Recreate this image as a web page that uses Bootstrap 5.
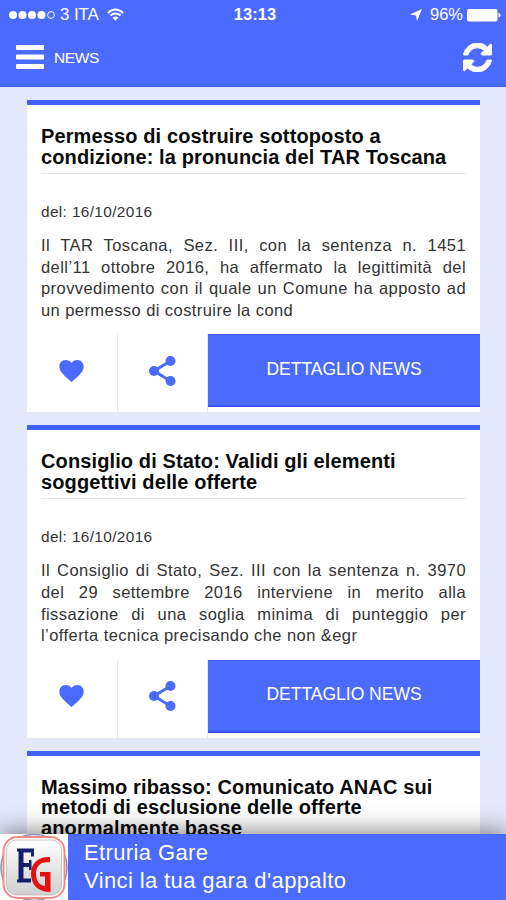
<!DOCTYPE html>
<html lang="it">
<head>
<meta charset="utf-8">
<meta name="viewport" content="width=device-width, initial-scale=1">
<title>News</title>
<link href="https://cdn.jsdelivr.net/npm/bootstrap@5.3.0/dist/css/bootstrap.min.css" rel="stylesheet">
<style>
:root { --brand: #4b6bff; --page: #e4e8fb; }
body { font-family: "Liberation Sans", Arial, sans-serif; background: var(--page); }
.screen { width: 506px; height: 900px; }
.app-header { height: 87px; background: var(--brand); border-bottom: 1px solid #3d5cec; }
.status-bar { height: 29px; padding: 0 5px 0 9px; font-size: 17.5px; line-height: 29px; }
.status-bar .clock { font-size: 16.5px; letter-spacing: .1px; }
.carrier { font-size: 17px; margin-left: 5px; letter-spacing: -.1px; }
.charge { font-size: 16.5px; }
.app-bar { height: 57px; padding: 0 14px 0 16px; }
.app-title { font-size: 15.5px; margin-left: 10px; letter-spacing: -.4px; }
.feed { padding: 13px 26px 0 27px; gap: 13px; }
.news-card { --bs-card-border-radius: 0; border: 0; border-top: 5px solid #3f62f5; height: 312.3px; flex: none; color: #000; }
.news-head { margin: 21px 14px 0; padding-bottom: 6px; border-bottom: 1px solid #e4e8fb; font-size: 20px; line-height: 20.5px; font-weight: 700; letter-spacing: .12px; color: #0b0b0b; }
.news-date { margin: 28px 14px 0; font-size: 15.4px; line-height: 20px; letter-spacing: .36px; color: #333; }
.news-text { margin: 13px 14px 0; font-size: 16.5px; line-height: 21.7px; letter-spacing: .43px; text-align: justify; color: #333; }
.actions { height: 78px; }
.action { width: 90.5px; border-right: 1px solid #e6e9fb; color: var(--brand); padding-bottom: 5px; }
.btn-detail { --bs-btn-border-radius: 0; height: 73px; background: var(--brand); border: 0; border-top: 1px solid #3d5cec; border-bottom: 2px solid #3355ee; color: #fff; font-size: 17.5px; padding: 0 0 3px; }
.ad-banner { height: 66px; background: var(--brand); box-shadow: 0 -2px 24px rgba(0,0,0,.5); }
.ad-logo { width: 68px; background: #fff; }
.ad-text { padding: 5px 0 0 16px; font-size: 22px; line-height: 28px; letter-spacing: .38px; }
</style>
<script src="https://cdn.jsdelivr.net/npm/bootstrap@5.3.0/dist/js/bootstrap.bundle.min.js"></script>
</head>
<body class="m-0 overflow-hidden">
<div class="screen d-flex flex-column position-relative overflow-hidden">
  <header class="app-header text-white flex-shrink-0">
    <div class="status-bar row g-0">
      <div class="col d-flex align-items-center">
        <svg width="46" height="10" fill="#fff"><circle cx="4" cy="5" r="4"/><circle cx="13.5" cy="5" r="4"/><circle cx="23" cy="5" r="4"/><circle cx="32.500" cy="5" r="4"/><circle cx="42" cy="5" r="3.4" fill="none" stroke="#fff" stroke-width="1"/></svg>
        <span class="carrier">3 ITA</span>
        <svg class="ms-2" width="17" height="13" viewBox="0 0 17 13" fill="none" stroke="#fff" stroke-width="2"><path d="M.8 4.900Q8.500-2 16.200 4.900M3.400 7.600q5.100-4.300 10.200 0"/><path d="M5.500 9.700q3-2.400 6 0L8.500 12.800z" fill="#fff" stroke="none"/></svg>
      </div>
      <div class="col-auto clock fw-bold">13:13</div>
      <div class="col d-flex align-items-center justify-content-end">
        <svg width="12" height="12" viewBox="0 0 12 12" fill="#fff"><path d="M12 0 7 12 6 6.500 0 5.500z"/></svg>
        <span class="ms-2 charge">96%</span>
        <svg class="ms-1" width="34" height="14" fill="#fff"><rect x="0" y="1" width="30.500" height="12.500" rx="2"/><path d="M31.500 5q2 .5 2 2.200T31.500 9.500z"/></svg>
      </div>
    </div>
    <div class="app-bar d-flex align-items-center">
      <svg width="28" height="25" fill="#fff"><rect y="0" width="28" height="5" rx="1"/><rect y="9.500" width="28" height="5" rx="1"/><rect y="19" width="28" height="5" rx="1"/></svg>
      <span class="app-title">NEWS</span>
      <svg class="ms-auto" width="29" height="29" viewBox="0 0 1536 1536" fill="#fff" stroke="#fff" stroke-width="45"><path d="M1511 928q0 5-1 7-64 268-268 434.500T764 1536q-146 0-282.500-55T238 1324l-129 129q-19 19-45 19t-45-19-19-45V960q0-26 19-45t45-19h448q26 0 45 19t19 45-19 45l-137 137q71 66 161 102t187 36q134 0 250-65t186-179q11-17 53-117 8-23 30-23h192q13 0 22.500 9.500t9.500 22.500zm25-800v448q0 26-19 45t-45 19h-448q-26 0-45-19t-19-45 19-45l138-138Q969 256 768 256q-134 0-250 65T332 500q-11 17-53 117-8 23-30 23H50q-13 0-22.500-9.500T18 608v-7q65-268 270-434.500T768 0q146 0 284 55.500T1297 212l130-129q19-19 45-19t45 19 19 45z"/></svg>
    </div>
  </header>

  <main class="feed d-flex flex-column flex-grow-1 overflow-hidden">
    <article class="card news-card">
      <h2 class="news-head">Permesso di costruire sottoposto a<br>condizione: la pronuncia del TAR Toscana</h2>
      <div class="news-date">del: 16/10/2016</div>
      <p class="news-text mb-0">Il TAR Toscana, Sez. III, con la sentenza n. 1451 dell’11 ottobre 2016, ha affermato la legittimità del provvedimento con il quale un Comune ha apposto ad un permesso di costruire la cond</p>
      <div class="actions d-flex mt-auto">
        <div class="action d-flex align-items-center justify-content-center"><svg width="25" height="22" viewBox="0 0 25 22" fill="currentColor"><path d="M12.500 22Q4 15 1.500 11C-1.500 5.500 1.500 0 6.800 0q3.700 0 5.700 3Q14.500 0 18.200 0c5.300 0 8.300 5.500 5.300 11Q21 15 12.500 22z"/></svg></div>
        <div class="action d-flex align-items-center justify-content-center"><svg width="27" height="30" viewBox="0 0 27 30" fill="currentColor"><path d="M21.500 5 5 15l16.500 10" fill="none" stroke="currentColor" stroke-width="3"/><circle cx="21.500" cy="5" r="5"/><circle cx="5" cy="15" r="5"/><circle cx="21.500" cy="25" r="5"/></svg></div>
        <button type="button" class="btn btn-detail flex-grow-1">DETTAGLIO NEWS</button>
      </div>
    </article>

    <article class="card news-card">
      <h2 class="news-head">Consiglio di Stato: Validi gli elementi<br>soggettivi delle offerte</h2>
      <div class="news-date">del: 16/10/2016</div>
      <p class="news-text mb-0">Il Consiglio di Stato, Sez. III con la sentenza n. 3970 del 29 settembre 2016 interviene in merito alla fissazione di una soglia minima di punteggio per l’offerta tecnica precisando che non &amp;egr</p>
      <div class="actions d-flex mt-auto">
        <div class="action d-flex align-items-center justify-content-center"><svg width="25" height="22" viewBox="0 0 25 22" fill="currentColor"><path d="M12.500 22Q4 15 1.500 11C-1.500 5.500 1.500 0 6.800 0q3.700 0 5.700 3Q14.500 0 18.200 0c5.300 0 8.300 5.500 5.300 11Q21 15 12.500 22z"/></svg></div>
        <div class="action d-flex align-items-center justify-content-center"><svg width="27" height="30" viewBox="0 0 27 30" fill="currentColor"><path d="M21.500 5 5 15l16.500 10" fill="none" stroke="currentColor" stroke-width="3"/><circle cx="21.500" cy="5" r="5"/><circle cx="5" cy="15" r="5"/><circle cx="21.500" cy="25" r="5"/></svg></div>
        <button type="button" class="btn btn-detail flex-grow-1">DETTAGLIO NEWS</button>
      </div>
    </article>

    <article class="card news-card">
      <h2 class="news-head">Massimo ribasso: Comunicato ANAC sui<br>metodi di esclusione delle offerte<br>anormalmente basse</h2>
    </article>
  </main>

  <footer class="ad-banner d-flex flex-shrink-0 position-relative text-white">
    <div class="ad-logo">
      <svg width="68" height="66" viewBox="0 0 68 66">
        <defs><linearGradient id="tile" x1="0" y1="0" x2="0" y2="1"><stop offset="0" stop-color="#fff"/><stop offset="1" stop-color="#cfcfcf"/></linearGradient></defs>
        <circle cx="34" cy="33.500" r="33" fill="#fff" stroke="#8492b8" stroke-width="1.500"/>
        <rect x="3.500" y="3" width="61" height="61" rx="14" fill="#fff" stroke="#f08a8a" stroke-width="2"/>
        <rect x="6.500" y="6" width="55" height="55" rx="10" fill="url(#tile)" stroke="#c4b4b4" stroke-width=".8"/>
        <path d="M17 14.500h17v8h-3v-4h-7.500V29H29v-3h2.500v10H29v-3h-5.500v11.500H31v4H17v-3h1.500V17.500H17z" fill="#14206e"/>
        <path d="M50 23v5.500C41 27 36 32 36 39.500c0 7 3 12 9 12.500v-9.500h-5v-4.500h10.500v20C37 58 31 50 31 39.500 31 29 39 22 50 23z" fill="#e31212"/>
      </svg>
    </div>
    <div class="ad-text"><div>Etruria Gare</div><div>Vinci la tua gara d'appalto</div></div>
  </footer>
</div>
</body>
</html>
